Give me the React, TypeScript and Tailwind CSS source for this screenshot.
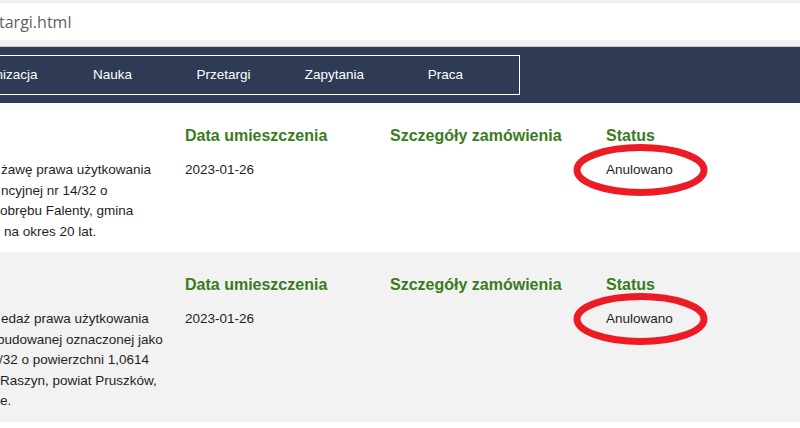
import React from "react";

const navItems = ["Organizacja", "Nauka", "Przetargi", "Zapytania", "Praca"];

const rows = [
  {
    bg: "bg-white",
    lines: [
      { t: "żawę prawa użytkowania", cls: "ml-[1px]" },
      { t: "ncyjnej nr 14/32 o", cls: "ml-[1px]" },
      { t: "obrębu Falenty, gmina", cls: "ml-0" },
      { t: "na okres 20 lat.", cls: "ml-[4px]" },
    ],
    date: "2023-01-26",
    status: "Anulowano",
  },
  {
    bg: "bg-[#f2f2f2]",
    lines: [
      { t: "edaż prawa użytkowania", cls: "ml-[1px]" },
      { t: "budowanej oznaczonej jako", cls: "-ml-[3px]" },
      { t: "/32 o powierzchni 1,0614", cls: "-ml-[1px]" },
      { t: "Raszyn, powiat Pruszków,", cls: "ml-0" },
      { t: "e.", cls: "ml-0" },
    ],
    date: "2023-01-26",
    status: "Anulowano",
  },
];

function RedCircle() {
  return (
    <svg
      className="absolute left-[-33px] top-[-16px] pointer-events-none"
      width="135"
      height="52"
      viewBox="0 0 135 52"
    >
      <ellipse cx="67.5" cy="26" rx="63.5" ry="22.5" fill="none" stroke="#ed1c24" strokeWidth="7" />
    </svg>
  );
}

export default function App() {
  return (
    <div className="w-[800px] h-[428px] overflow-hidden bg-white font-['Liberation_Sans',Arial,sans-serif]">
      {/* pasek adresu */}
      <div className="h-[3px] bg-[#f0f0f0]" />
      <div className="h-[37px] bg-white flex items-center overflow-hidden">
        <span className="-ml-[1px] text-[16px] text-[#5f5f5f] font-['Open_Sans',sans-serif] whitespace-nowrap">
          targi.html
        </span>
      </div>
      <div className="h-[6px] bg-[#f1f1f1]" />
      <div className="h-px bg-[#c8c8c8]" />

      {/* menu */}
      <div className="h-[56px] bg-[#2f3a55] py-[8px] overflow-hidden">
        <nav className="ml-[-73px] w-fit h-[40px] border border-white flex items-center px-[18px]">
          {navItems.map((item) => (
            <a
              key={item}
              href="#"
              className="w-[111px] text-center text-white text-[13.5px] leading-none whitespace-nowrap"
            >
              {item}
            </a>
          ))}
        </nav>
      </div>

      {/* przetargi */}
      {rows.map((r, i) => (
        <div key={i} className={`${r.bg} flex pt-[23px] pb-[10px]`}>
          <div className="w-[185px] shrink-0 overflow-hidden">
            <div className="h-[20px]" />
            <div className="mt-[14px] text-[13.5px] leading-[20.5px] text-[#1f1f1f]">
              {r.lines.map((l) => (
                <div key={l.t} className={`whitespace-nowrap ${l.cls}`}>
                  {l.t}
                </div>
              ))}
            </div>
          </div>

          <div className="w-[205px] shrink-0">
            <div className="h-[20px] leading-[20px] text-[16px] font-bold text-[#3a7b1f]">Data umieszczenia</div>
            <div className="mt-[14px] text-[13.5px] leading-[20.5px] text-[#1f1f1f]">{r.date}</div>
          </div>

          <div className="w-[216px] shrink-0">
            <div className="h-[20px] leading-[20px] text-[16px] font-bold text-[#3a7b1f] whitespace-nowrap">
              Szczegóły zamówienia
            </div>
          </div>

          <div className="flex-1">
            <div className="h-[20px] leading-[20px] text-[16px] font-bold text-[#3a7b1f]">Status</div>
            <div className="mt-[14px] text-[13.5px] leading-[20.5px] text-[#1f1f1f]">
              <span className="relative inline-block">
                {r.status}
                <RedCircle />
              </span>
            </div>
          </div>
        </div>
      ))}
    </div>
  );
}
